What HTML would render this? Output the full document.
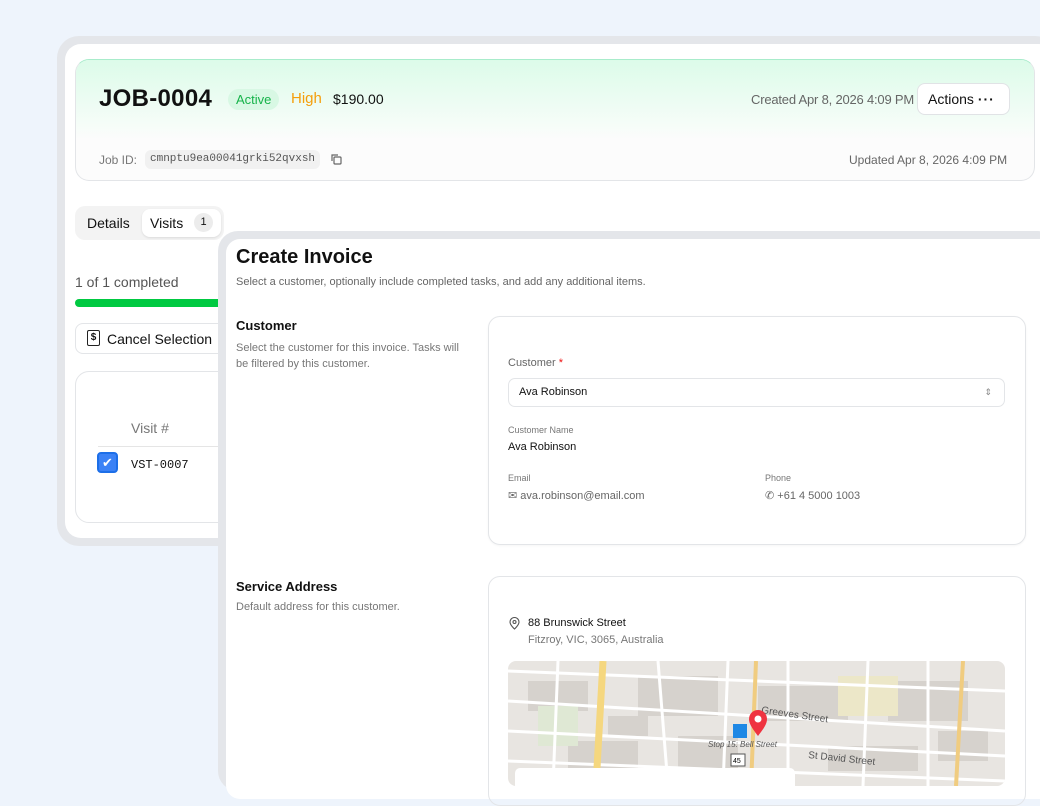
<!DOCTYPE html>
<html><head><meta charset="utf-8"><style>
*{box-sizing:border-box;margin:0;padding:0}
body{width:1040px;height:780px;overflow:hidden;background:#eef4fc;font-family:"Liberation Sans",sans-serif;color:#111;position:relative}
.a{position:absolute;white-space:nowrap}
.mono{font-family:"Liberation Mono",monospace}
</style></head><body>
<div class="a" style="left:57px;top:36px;width:1000px;height:510px;background:#e4e6ea;border-radius:22px"></div>
<div class="a" style="left:65px;top:44px;width:990px;height:494px;background:#fff;border-radius:16px"></div>
<div class="a" style="left:75px;top:59px;width:960px;height:122px;border:1px solid #e3e5e8;border-top-color:#a8eccb;border-radius:14px;background:#fcfcfc;overflow:hidden">
 <div style="height:80px;background:linear-gradient(#dcfbe9,#f7fdf9 85%,#fcfcfc)"></div>
</div>
<div class="a" style="left:99px;top:85px;font-size:24px;font-weight:bold;letter-spacing:.3px">JOB-0004</div>
<div class="a" style="left:228px;top:89px;height:21px;padding:0 8px;line-height:21px;border-radius:11px;background:#d8f8e4;color:#16b34a;font-size:13px">Active</div>
<div class="a" style="left:291px;top:90px;font-size:15px;color:#f59e0b">High</div>
<div class="a" style="left:333px;top:91px;font-size:14px">$190.00</div>
<div class="a" style="left:751px;top:92px;font-size:13px;color:#666;letter-spacing:-.2px">Created Apr 8, 2026 4:09 PM</div>
<div class="a" style="left:917px;top:83px;width:93px;height:32px;border:1px solid #e1e3e6;border-radius:8px;background:#fff;font-size:14px;line-height:30px;padding-left:10px">Actions <span style="letter-spacing:1px;font-weight:bold">···</span></div>
<div class="a" style="left:99px;top:153px;font-size:12px;color:#777">Job ID:</div>
<div class="a mono" style="left:145px;top:150px;height:19px;padding:0 5px;line-height:19px;background:#f1f1f1;border-radius:6px;font-size:11px;color:#555">cmnptu9ea00041grki52qvxsh</div>
<svg class="a" style="left:330px;top:153px" width="12" height="12" viewBox="0 0 12 12" fill="none" stroke="#666" stroke-width="1.2"><rect x="4" y="4" width="7" height="7" rx="1"/><path d="M2 8V2h6"/></svg>
<div class="a" style="left:849px;top:153px;font-size:12px;color:#666">Updated Apr 8, 2026 4:09 PM</div>
<div class="a" style="left:75px;top:206px;width:149px;height:34px;background:#f3f3f3;border-radius:10px"></div>
<div class="a" style="left:87px;top:215px;font-size:14px">Details</div>
<div class="a" style="left:142px;top:209px;width:79px;height:28px;background:#fff;border-radius:8px;box-shadow:0 1px 2px rgba(0,0,0,.1)"></div>
<div class="a" style="left:150px;top:215px;font-size:14px">Visits</div>
<div class="a" style="left:194px;top:213px;width:19px;height:19px;border-radius:10px;background:#ececec;font-size:11px;text-align:center;line-height:19px">1</div>
<div class="a" style="left:75px;top:274px;font-size:14px;color:#555">1 of 1 completed</div>
<div class="a" style="left:75px;top:299px;width:160px;height:8px;background:#00c941;border-radius:4px"></div>
<div class="a" style="left:75px;top:323px;width:170px;height:31px;border:1px solid #e3e5e8;border-radius:8px;background:#fff"></div>
<div class="a" style="left:87px;top:330px;width:13px;height:16px;border:1.5px solid #222;border-radius:2px;font-size:10px;font-weight:bold;text-align:center;line-height:13px">$</div>
<div class="a" style="left:107px;top:331px;font-size:14px">Cancel Selection</div>
<div class="a" style="left:75px;top:371px;width:170px;height:152px;border:1px solid #e3e5e8;border-radius:14px;background:#fff"></div>
<div class="a" style="left:131px;top:420px;font-size:14px;color:#777">Visit #</div>
<div class="a" style="left:98px;top:446px;width:140px;height:1px;background:#e5e5e5"></div>
<div class="a" style="left:97px;top:452px;width:21px;height:21px;border:2px solid #1d6fe8;border-radius:4px;background:#3b82f6;color:#fff;font-size:13px;text-align:center;line-height:17px">✔</div>
<div class="a mono" style="left:131px;top:458px;font-size:12px">VST-0007</div>
<div class="a" style="left:218px;top:231px;width:840px;height:560px;background:#e4e6ea;border-radius:20px"></div>
<div class="a" style="left:226px;top:239px;width:830px;height:560px;background:#fff;border-radius:14px"></div>
<div class="a" style="left:236px;top:246px;font-size:20px;font-weight:bold">Create Invoice</div>
<div class="a" style="left:236px;top:276px;font-size:11px;color:#666">Select a customer, optionally include completed tasks, and add any additional items.</div>
<div class="a" style="left:236px;top:318px;font-size:13px;font-weight:bold">Customer</div>
<div class="a" style="left:236px;top:340px;font-size:11px;color:#777;line-height:16px;white-space:normal;width:225px">Select the customer for this invoice. Tasks will be filtered by this customer.</div>
<div class="a" style="left:488px;top:316px;width:538px;height:229px;border:1px solid #e3e5e8;border-radius:12px;box-shadow:0 1px 2px rgba(0,0,0,.04)"></div>
<div class="a" style="left:508px;top:357px;font-size:11px;color:#666">Customer <span style="color:#e11">*</span></div>
<div class="a" style="left:508px;top:378px;width:497px;height:29px;border:1px solid #e3e5e8;border-radius:7px;font-size:11px;line-height:27px;padding-left:10px">Ava Robinson<span style="position:absolute;right:12px;top:0;color:#888;font-size:9px">⇕</span></div>
<div class="a" style="left:508px;top:425px;font-size:9px;color:#777">Customer Name</div>
<div class="a" style="left:508px;top:441px;font-size:11px">Ava Robinson</div>
<div class="a" style="left:508px;top:473px;font-size:9px;color:#777">Email</div>
<div class="a" style="left:508px;top:489px;font-size:11px;color:#666">✉ ava.robinson@email.com</div>
<div class="a" style="left:765px;top:473px;font-size:9px;color:#777">Phone</div>
<div class="a" style="left:765px;top:489px;font-size:11px;color:#666">✆ +61 4 5000 1003</div>
<div class="a" style="left:236px;top:579px;font-size:13px;font-weight:bold">Service Address</div>
<div class="a" style="left:236px;top:601px;font-size:11px;color:#777">Default address for this customer.</div>
<div class="a" style="left:488px;top:576px;width:538px;height:230px;border:1px solid #e3e5e8;border-radius:12px"></div>
<svg class="a" style="left:509px;top:617px" width="11" height="13" viewBox="0 0 11 13" fill="none" stroke="#555" stroke-width="1.1"><path d="M5.5 12s4.5-4 4.5-7a4.5 4.5 0 0 0-9 0c0 3 4.5 7 4.5 7z"/><circle cx="5.5" cy="5" r="1.5"/></svg>
<div class="a" style="left:528px;top:617px;font-size:11px">88 Brunswick Street</div>
<div class="a" style="left:528px;top:634px;font-size:11px;color:#777">Fitzroy, VIC, 3065, Australia</div>
<svg class="a" style="left:508px;top:661px;border-radius:8px" width="497" height="125" viewBox="0 0 497 125">
<rect width="497" height="125" fill="#e8e5e1"/>
<g fill="#d6d2cd"><rect x="20" y="20" width="60" height="30"/><rect x="130" y="15" width="80" height="40"/><rect x="250" y="25" width="90" height="35"/><rect x="380" y="20" width="80" height="40"/><rect x="60" y="80" width="70" height="30"/><rect x="170" y="75" width="60" height="35"/><rect x="320" y="85" width="90" height="25"/><rect x="100" y="55" width="40" height="20"/><rect x="430" y="70" width="50" height="30"/></g>
<rect x="30" y="45" width="40" height="40" fill="#dfe8d4"/><rect x="330" y="15" width="60" height="40" fill="#ece7c8"/>
<g stroke="#fff" stroke-width="3"><path d="M0 40L497 70M0 100L497 120M0 10L497 30M0 70L497 95"/><path d="M150 0L160 125M220 0L215 125M280 0L280 125M360 0L355 125M420 0L420 125M50 0L45 125"/></g>
<path d="M95 0L88 125" stroke="#f5d77f" stroke-width="7"/><path d="M248 0L243 125" stroke="#f0cc80" stroke-width="4"/><path d="M455 0L448 125" stroke="#f0cc80" stroke-width="4"/>
<text x="253" y="52" font-size="10" fill="#555" transform="rotate(8 253 52)">Greeves Street</text>
<text x="300" y="97" font-size="10" fill="#555" transform="rotate(6 300 97)">St David Street</text>
<text x="200" y="86" font-size="8" fill="#555" font-style="italic">Stop 15: Bell Street</text>
<rect x="225" y="63" width="14" height="14" fill="#1e88e5"/>
<rect x="223" y="93" width="14" height="12" fill="#fff" stroke="#555"/><text x="225" y="102" font-size="7">45</text>
<path d="M250 75c-7-9-9-13-9-17a9 9 0 0 1 18 0c0 4-2 8-9 17z" fill="#ef3340"/><circle cx="250" cy="58" r="3.5" fill="#fff"/>
<rect x="7" y="107" width="280" height="25" rx="5" fill="#fff"/>
</svg>
</body></html>
